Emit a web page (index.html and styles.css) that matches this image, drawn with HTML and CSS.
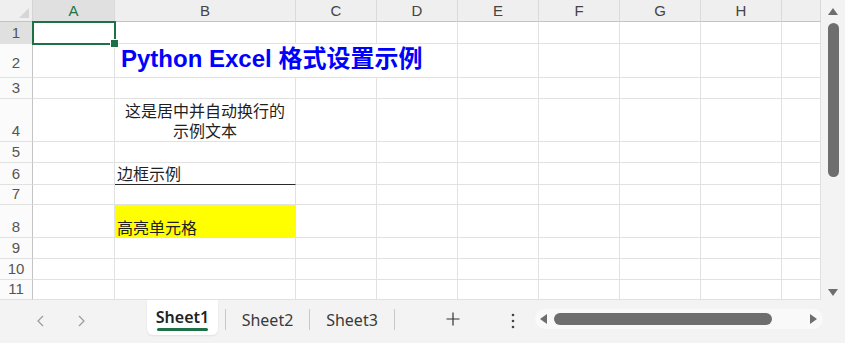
FILE: index.html
```html
<!DOCTYPE html>
<html lang="zh-CN">
<head>
    <meta charset="UTF-8">
    <meta name="viewport" content="width=device-width, initial-scale=1.0">
    <title>Python Excel 格式设置示例</title>
    <link rel="stylesheet" href="styles.css">
</head>
<body>
    <div class="book">
        <div class="main">
            <div class="sheet">
                <!-- column headers -->
                <div class="corner"><span class="tri"></span></div>
                <div class="ch sel">A</div>
                <div class="ch">B</div>
                <div class="ch">C</div>
                <div class="ch">D</div>
                <div class="ch">E</div>
                <div class="ch">F</div>
                <div class="ch">G</div>
                <div class="ch">H</div>
                <div class="ch"></div>

                <!-- row 1 -->
                <div class="rh sel">1</div>
                <div class="c active"></div><div class="c"></div><div class="c"></div><div class="c"></div><div class="c"></div><div class="c"></div><div class="c"></div><div class="c"></div><div class="c"></div>

                <!-- row 2 -->
                <div class="rh mid">2</div>
                <div class="c"></div>
                <div class="c title">Python Excel 格式设置示例</div>
                <div class="c"></div><div class="c"></div><div class="c"></div><div class="c"></div><div class="c"></div>

                <!-- row 3 -->
                <div class="rh">3</div>
                <div class="c"></div><div class="c"></div><div class="c"></div><div class="c"></div><div class="c"></div><div class="c"></div><div class="c"></div><div class="c"></div><div class="c"></div>

                <!-- row 4 -->
                <div class="rh">4</div>
                <div class="c"></div>
                <div class="c wrap">这是居中并自动换行的示例文本</div>
                <div class="c"></div><div class="c"></div><div class="c"></div><div class="c"></div><div class="c"></div><div class="c"></div><div class="c"></div>

                <!-- row 5 -->
                <div class="rh">5</div>
                <div class="c"></div><div class="c"></div><div class="c"></div><div class="c"></div><div class="c"></div><div class="c"></div><div class="c"></div><div class="c"></div><div class="c"></div>

                <!-- row 6 -->
                <div class="rh">6</div>
                <div class="c"></div>
                <div class="c txt boxed">边框示例</div>
                <div class="c"></div><div class="c"></div><div class="c"></div><div class="c"></div><div class="c"></div><div class="c"></div><div class="c"></div>

                <!-- row 7 -->
                <div class="rh">7</div>
                <div class="c"></div><div class="c"></div><div class="c"></div><div class="c"></div><div class="c"></div><div class="c"></div><div class="c"></div><div class="c"></div><div class="c"></div>

                <!-- row 8 -->
                <div class="rh">8</div>
                <div class="c"></div>
                <div class="c txt highlight">高亮单元格</div>
                <div class="c"></div><div class="c"></div><div class="c"></div><div class="c"></div><div class="c"></div><div class="c"></div><div class="c"></div>

                <!-- rows 9 - 11 -->
                <div class="rh">9</div>
                <div class="c"></div><div class="c"></div><div class="c"></div><div class="c"></div><div class="c"></div><div class="c"></div><div class="c"></div><div class="c"></div><div class="c"></div>
                <div class="rh">10</div>
                <div class="c"></div><div class="c"></div><div class="c"></div><div class="c"></div><div class="c"></div><div class="c"></div><div class="c"></div><div class="c"></div><div class="c"></div>
                <div class="rh">11</div>
                <div class="c"></div><div class="c"></div><div class="c"></div><div class="c"></div><div class="c"></div><div class="c"></div><div class="c"></div><div class="c"></div><div class="c"></div>
            </div>

            <div class="vscroll">
                <span class="arrow up"></span>
                <div class="vthumb"></div>
                <div class="spacer"></div>
                <span class="arrow down"></span>
            </div>
        </div>

        <div class="tabbar">
            <div class="nav">
                <svg width="12" height="14" viewBox="0 0 12 14"><polyline points="8,2 3,7 8,12" fill="none" stroke="#9a9a9a" stroke-width="1.2"/></svg>
                <svg width="12" height="14" viewBox="0 0 12 14"><polyline points="4,2 9,7 4,12" fill="none" stroke="#9a9a9a" stroke-width="1.2"/></svg>
            </div>
            <div class="tab active">Sheet1</div>
            <span class="sep"></span>
            <div class="tab">Sheet2</div>
            <span class="sep"></span>
            <div class="tab">Sheet3</div>
            <span class="sep"></span>
            <div class="add">
                <svg width="14" height="14" viewBox="0 0 14 14"><path d="M7 0.5V13.5M0.5 7H13.5" stroke="#333" stroke-width="1.2"/></svg>
            </div>
            <div class="more">
                <svg width="4" height="16" viewBox="0 0 4 16"><circle cx="2" cy="2" r="1.3" fill="#444"/><circle cx="2" cy="8" r="1.3" fill="#444"/><circle cx="2" cy="14" r="1.3" fill="#444"/></svg>
            </div>
            <div class="hscroll">
                <span class="arrow left"></span>
                <div class="hthumb"></div>
                <span class="arrow right"></span>
            </div>
        </div>
    </div>
</body>
</html>
```

FILE: styles.css
```css
* {
    box-sizing: border-box;
}
body {
    margin: 0;
    font-family: "Noto Sans", "Noto Sans CJK SC", sans-serif;
    background-color: #ffffff;
    overflow: hidden;
}
.book {
    width: 845px;
    height: 343px;
    display: flex;
    flex-direction: column;
}
.main {
    display: flex;
    height: 300px;
    overflow: hidden;
}
.sheet {
    display: grid;
    grid-template-columns: 33px 82px 181px repeat(6, 81px) 39px;
    grid-template-rows: 22px 22px 34px 21px 43px 21px 22px 20px 33px 21px 21px 20px;
    width: 821px;
    height: 300px;
    overflow: hidden;
}
.corner {
    background-color: #efefef;
    border-right: 1px solid #d4d4d4;
    border-bottom: 1px solid #c4c4c4;
    position: relative;
}
.corner .tri {
    position: absolute;
    right: 3px;
    bottom: 3px;
    width: 0;
    height: 0;
    border-left: 10px solid transparent;
    border-bottom: 10px solid #d6d6d6;
}
.ch {
    background-color: #efefef;
    border-right: 1px solid #dadada;
    border-bottom: 1px solid #c4c4c4;
    font-family: "Liberation Sans", Arial, sans-serif;
    font-size: 15px;
    color: #444;
    display: flex;
    align-items: center;
    justify-content: center;
}
.ch.sel {
    background-color: #e0e0e0;
    color: #217346;
}
.rh {
    background-color: #fbfbfb;
    border-right: 1px solid #c4c4c4;
    border-bottom: 1px solid #e1e1e1;
    font-family: "Liberation Sans", Arial, sans-serif;
    font-size: 15px;
    color: #555;
    display: flex;
    align-items: flex-end;
    justify-content: center;
    padding-bottom: 2px;
}
.rh.mid {
    align-items: center;
    padding: 4px 0 0;
}
.rh.sel {
    background-color: #e0e0e0;
}
.c {
    border-right: 1px solid #e1e1e1;
    border-bottom: 1px solid #e1e1e1;
    font-family: "Noto Sans CJK SC", sans-serif;
    font-size: 16px;
    color: #1f1f1f;
}
.c.active {
    position: relative;
}
.c.active::before {
    content: "";
    position: absolute;
    left: -1px;
    top: -1px;
    right: -2px;
    bottom: -2px;
    border: 2px solid #1e7145;
}
.c.active::after {
    content: "";
    position: absolute;
    right: -5px;
    bottom: -5px;
    width: 7px;
    height: 7px;
    background-color: #1e7145;
    border: 1px solid #ffffff;
}
.c.title {
    grid-column: span 3;
    font-family: "Liberation Sans", "Noto Sans CJK SC", sans-serif;
    font-weight: bold;
    font-size: 24px;
    color: #0000ff;
    white-space: nowrap;
    display: flex;
    align-items: flex-end;
    line-height: 26px;
    padding: 0 0 5px 6px;
}
.c.wrap {
    text-align: center;
    line-height: 20px;
    padding: 0 6px 1px;
    display: flex;
    align-items: flex-end;
    justify-content: center;
}
.c.txt {
    display: flex;
    align-items: flex-end;
    line-height: 20px;
    padding: 0 0 1px 2px;
}
.c.boxed {
    border-bottom: 1px solid #2a2a2a;
}
.c.highlight {
    background-color: #ffff00;
    padding-bottom: 0;
}
.vscroll {
    width: 24px;
    height: 300px;
    background-color: #f3f3f3;
    display: flex;
    flex-direction: column;
    align-items: center;
    padding: 8px 0 4px;
}
.vthumb {
    width: 11px;
    height: 154px;
    margin-top: 8px;
    background-color: #6e6e6e;
    border-radius: 6px;
}
.spacer {
    flex: 1;
}
.arrow {
    width: 0;
    height: 0;
    display: block;
}
.arrow.up {
    border-left: 5px solid transparent;
    border-right: 5px solid transparent;
    border-bottom: 7px solid #6e6e6e;
}
.arrow.down {
    border-left: 5px solid transparent;
    border-right: 5px solid transparent;
    border-top: 7px solid #6e6e6e;
}
.arrow.left {
    border-top: 5px solid transparent;
    border-bottom: 5px solid transparent;
    border-right: 7px solid #6e6e6e;
}
.arrow.right {
    border-top: 5px solid transparent;
    border-bottom: 5px solid transparent;
    border-left: 7px solid #6e6e6e;
    margin-left: auto;
}
.tabbar {
    height: 43px;
    background-color: #f3f3f3;
    display: flex;
    align-items: flex-start;
}
.nav {
    width: 147px;
    height: 43px;
    display: flex;
    align-items: center;
    gap: 28px;
    padding: 0 0 2px 35px;
}
.tab {
    font-family: "Noto Sans", sans-serif;
    font-size: 16px;
    line-height: 22px;
    color: #3a3a3a;
    text-align: center;
    padding-top: 9px;
    height: 43px;
}
.tab:nth-of-type(3) {
    width: 83px;
}
.tab:nth-of-type(4) {
    width: 84px;
}
.tab.active {
    width: 71px;
    height: 35px;
    padding-top: 6px;
    margin-right: 7px;
    background-color: #ffffff;
    border-radius: 0 0 6px 6px;
    box-shadow: 0 1px 2px rgba(0, 0, 0, 0.08);
    font-weight: 600;
    color: #222;
    display: flex;
    flex-direction: column;
    align-items: center;
}
.tab.active::after {
    content: "";
    width: 51px;
    height: 3px;
    background-color: #1e7145;
    border-radius: 2px;
}
.sep {
    width: 1px;
    height: 21px;
    margin-top: 9px;
    background-color: #c8c8c8;
}
.add {
    width: 20px;
    height: 43px;
    margin-left: 48px;
    display: flex;
    align-items: center;
    justify-content: center;
    padding-bottom: 5px;
}
.more {
    width: 10px;
    height: 43px;
    margin-left: 45px;
    display: flex;
    align-items: center;
    justify-content: center;
    padding-bottom: 2px;
}
.hscroll {
    width: 288px;
    height: 20px;
    margin: 9px 0 0 17px;
    background-color: #f9f9f9;
    border-radius: 10px;
    display: flex;
    align-items: center;
    padding: 0 6px 0 5px;
}
.hthumb {
    width: 218px;
    height: 12px;
    margin-left: 7px;
    background-color: #6e6e6e;
    border-radius: 6px;
}
```
